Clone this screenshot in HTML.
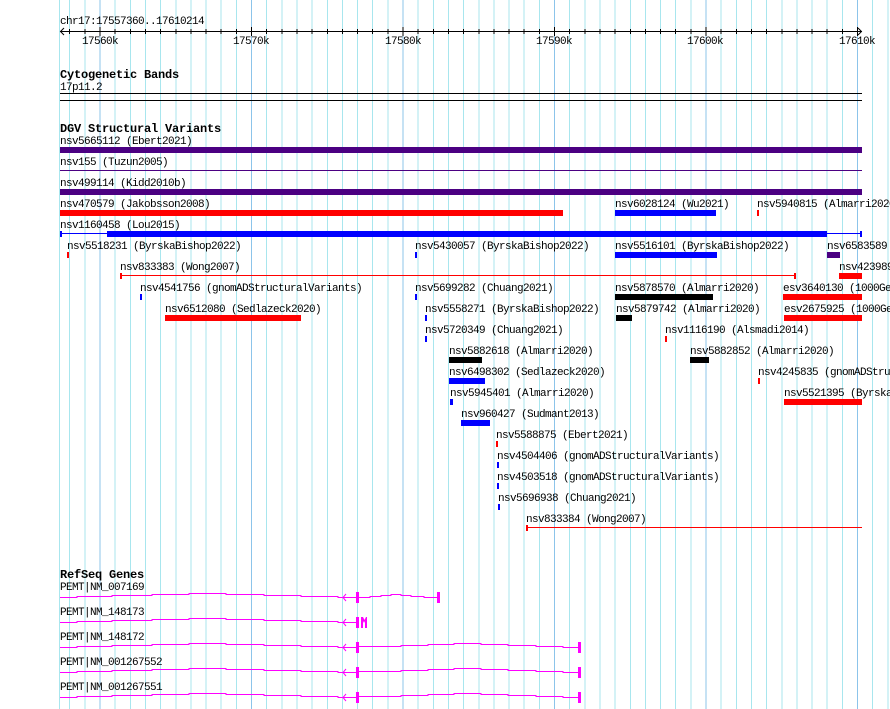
<!DOCTYPE html>
<html><head><meta charset="utf-8"><style>
html,body{margin:0;padding:0;background:#fff;width:890px;height:709px;overflow:hidden}
svg{display:block}
text{font-family:"Liberation Mono","DejaVu Sans Mono",monospace;font-size:11px;letter-spacing:-0.6px;fill:#000}
.h{font-weight:bold;font-size:12px;letter-spacing:-0.2px}
</style></head><body>
<svg width="890" height="709" viewBox="0 0 890 709" xmlns="http://www.w3.org/2000/svg" shape-rendering="crispEdges">
<g stroke-width="1">
<line x1="59.5" y1="0" x2="59.5" y2="709" stroke="#a8e6ee"/>
<line x1="69.7" y1="0" x2="69.7" y2="709" stroke="#a8e6ee"/>
<line x1="84.8" y1="0" x2="84.8" y2="709" stroke="#a8e6ee"/>
<line x1="100.0" y1="0" x2="100.0" y2="709" stroke="#8cc4ea"/>
<line x1="115.2" y1="0" x2="115.2" y2="709" stroke="#a8e6ee"/>
<line x1="130.3" y1="0" x2="130.3" y2="709" stroke="#a8e6ee"/>
<line x1="145.5" y1="0" x2="145.5" y2="709" stroke="#a8e6ee"/>
<line x1="160.6" y1="0" x2="160.6" y2="709" stroke="#a8e6ee"/>
<line x1="175.8" y1="0" x2="175.8" y2="709" stroke="#a8e6ee"/>
<line x1="190.9" y1="0" x2="190.9" y2="709" stroke="#a8e6ee"/>
<line x1="206.1" y1="0" x2="206.1" y2="709" stroke="#a8e6ee"/>
<line x1="221.2" y1="0" x2="221.2" y2="709" stroke="#a8e6ee"/>
<line x1="236.4" y1="0" x2="236.4" y2="709" stroke="#a8e6ee"/>
<line x1="251.5" y1="0" x2="251.5" y2="709" stroke="#8cc4ea"/>
<line x1="266.7" y1="0" x2="266.7" y2="709" stroke="#a8e6ee"/>
<line x1="281.8" y1="0" x2="281.8" y2="709" stroke="#a8e6ee"/>
<line x1="297.0" y1="0" x2="297.0" y2="709" stroke="#a8e6ee"/>
<line x1="312.1" y1="0" x2="312.1" y2="709" stroke="#a8e6ee"/>
<line x1="327.3" y1="0" x2="327.3" y2="709" stroke="#a8e6ee"/>
<line x1="342.4" y1="0" x2="342.4" y2="709" stroke="#a8e6ee"/>
<line x1="357.6" y1="0" x2="357.6" y2="709" stroke="#a8e6ee"/>
<line x1="372.7" y1="0" x2="372.7" y2="709" stroke="#a8e6ee"/>
<line x1="387.9" y1="0" x2="387.9" y2="709" stroke="#a8e6ee"/>
<line x1="403.0" y1="0" x2="403.0" y2="709" stroke="#8cc4ea"/>
<line x1="418.2" y1="0" x2="418.2" y2="709" stroke="#a8e6ee"/>
<line x1="433.3" y1="0" x2="433.3" y2="709" stroke="#a8e6ee"/>
<line x1="448.5" y1="0" x2="448.5" y2="709" stroke="#a8e6ee"/>
<line x1="463.6" y1="0" x2="463.6" y2="709" stroke="#a8e6ee"/>
<line x1="478.8" y1="0" x2="478.8" y2="709" stroke="#a8e6ee"/>
<line x1="493.9" y1="0" x2="493.9" y2="709" stroke="#a8e6ee"/>
<line x1="509.1" y1="0" x2="509.1" y2="709" stroke="#a8e6ee"/>
<line x1="524.2" y1="0" x2="524.2" y2="709" stroke="#a8e6ee"/>
<line x1="539.4" y1="0" x2="539.4" y2="709" stroke="#a8e6ee"/>
<line x1="554.5" y1="0" x2="554.5" y2="709" stroke="#8cc4ea"/>
<line x1="569.7" y1="0" x2="569.7" y2="709" stroke="#a8e6ee"/>
<line x1="584.8" y1="0" x2="584.8" y2="709" stroke="#a8e6ee"/>
<line x1="600.0" y1="0" x2="600.0" y2="709" stroke="#a8e6ee"/>
<line x1="615.1" y1="0" x2="615.1" y2="709" stroke="#a8e6ee"/>
<line x1="630.3" y1="0" x2="630.3" y2="709" stroke="#a8e6ee"/>
<line x1="645.4" y1="0" x2="645.4" y2="709" stroke="#a8e6ee"/>
<line x1="660.6" y1="0" x2="660.6" y2="709" stroke="#a8e6ee"/>
<line x1="675.7" y1="0" x2="675.7" y2="709" stroke="#a8e6ee"/>
<line x1="690.9" y1="0" x2="690.9" y2="709" stroke="#a8e6ee"/>
<line x1="706.0" y1="0" x2="706.0" y2="709" stroke="#8cc4ea"/>
<line x1="721.2" y1="0" x2="721.2" y2="709" stroke="#a8e6ee"/>
<line x1="736.3" y1="0" x2="736.3" y2="709" stroke="#a8e6ee"/>
<line x1="751.5" y1="0" x2="751.5" y2="709" stroke="#a8e6ee"/>
<line x1="766.6" y1="0" x2="766.6" y2="709" stroke="#a8e6ee"/>
<line x1="781.8" y1="0" x2="781.8" y2="709" stroke="#a8e6ee"/>
<line x1="796.9" y1="0" x2="796.9" y2="709" stroke="#a8e6ee"/>
<line x1="812.1" y1="0" x2="812.1" y2="709" stroke="#a8e6ee"/>
<line x1="827.2" y1="0" x2="827.2" y2="709" stroke="#a8e6ee"/>
<line x1="842.4" y1="0" x2="842.4" y2="709" stroke="#a8e6ee"/>
<line x1="857.5" y1="0" x2="857.5" y2="709" stroke="#8cc4ea"/>
<line x1="872.7" y1="0" x2="872.7" y2="709" stroke="#a8e6ee"/>
<line x1="887.8" y1="0" x2="887.8" y2="709" stroke="#a8e6ee"/>
</g>

<text x="60" y="24">chr17:17557360..17610214</text>
<line x1="60" y1="31.5" x2="862" y2="31.5" stroke="#000"/>
<path d="M64,28 L60.5,31.5 L64,35 M858,28 L861.5,31.5 L858,35" stroke="#000" fill="none" shape-rendering="auto"/>
<g stroke="#000">
<line x1="69.7" y1="29" x2="69.7" y2="34"/><line x1="84.8" y1="29" x2="84.8" y2="34"/><line x1="100" y1="27" x2="100" y2="36"/>
<line x1="115.2" y1="29" x2="115.2" y2="34"/><line x1="130.3" y1="29" x2="130.3" y2="34"/><line x1="145.5" y1="29" x2="145.5" y2="34"/><line x1="160.6" y1="29" x2="160.6" y2="34"/><line x1="175.8" y1="29" x2="175.8" y2="34"/><line x1="190.9" y1="29" x2="190.9" y2="34"/><line x1="206.1" y1="29" x2="206.1" y2="34"/><line x1="221.2" y1="29" x2="221.2" y2="34"/><line x1="236.4" y1="29" x2="236.4" y2="34"/><line x1="251.5" y1="27" x2="251.5" y2="36"/>
<line x1="266.7" y1="29" x2="266.7" y2="34"/><line x1="281.8" y1="29" x2="281.8" y2="34"/><line x1="297" y1="29" x2="297" y2="34"/><line x1="312.1" y1="29" x2="312.1" y2="34"/><line x1="327.3" y1="29" x2="327.3" y2="34"/><line x1="342.4" y1="29" x2="342.4" y2="34"/><line x1="357.6" y1="29" x2="357.6" y2="34"/><line x1="372.7" y1="29" x2="372.7" y2="34"/><line x1="387.9" y1="29" x2="387.9" y2="34"/><line x1="403" y1="27" x2="403" y2="36"/>
<line x1="418.2" y1="29" x2="418.2" y2="34"/><line x1="433.3" y1="29" x2="433.3" y2="34"/><line x1="448.5" y1="29" x2="448.5" y2="34"/><line x1="463.6" y1="29" x2="463.6" y2="34"/><line x1="478.8" y1="29" x2="478.8" y2="34"/><line x1="493.9" y1="29" x2="493.9" y2="34"/><line x1="509.1" y1="29" x2="509.1" y2="34"/><line x1="524.2" y1="29" x2="524.2" y2="34"/><line x1="539.4" y1="29" x2="539.4" y2="34"/><line x1="554.5" y1="27" x2="554.5" y2="36"/>
<line x1="569.7" y1="29" x2="569.7" y2="34"/><line x1="584.8" y1="29" x2="584.8" y2="34"/><line x1="600" y1="29" x2="600" y2="34"/><line x1="615.1" y1="29" x2="615.1" y2="34"/><line x1="630.3" y1="29" x2="630.3" y2="34"/><line x1="645.4" y1="29" x2="645.4" y2="34"/><line x1="660.6" y1="29" x2="660.6" y2="34"/><line x1="675.7" y1="29" x2="675.7" y2="34"/><line x1="690.9" y1="29" x2="690.9" y2="34"/><line x1="706" y1="27" x2="706" y2="36"/>
<line x1="721.2" y1="29" x2="721.2" y2="34"/><line x1="736.3" y1="29" x2="736.3" y2="34"/><line x1="751.5" y1="29" x2="751.5" y2="34"/><line x1="766.6" y1="29" x2="766.6" y2="34"/><line x1="781.8" y1="29" x2="781.8" y2="34"/><line x1="796.9" y1="29" x2="796.9" y2="34"/><line x1="812.1" y1="29" x2="812.1" y2="34"/><line x1="827.2" y1="29" x2="827.2" y2="34"/><line x1="842.4" y1="29" x2="842.4" y2="34"/><line x1="857.5" y1="27" x2="857.5" y2="36"/>
</g>
<text x="82" y="44">17560k</text>
<text x="233" y="44">17570k</text>
<text x="385" y="44">17580k</text>
<text x="536" y="44">17590k</text>
<text x="687" y="44">17600k</text>
<text x="839" y="44">17610k</text>

<text class="h" x="60" y="78">Cytogenetic Bands</text>
<text x="60" y="90">17p11.2</text>
<rect x="60" y="93" width="802" height="1" fill="#000"/>
<rect x="60" y="100" width="802" height="1" fill="#000"/>

<text class="h" x="60" y="132">DGV Structural Variants</text>
<g>
<text x="60" y="144">nsv5665112 (Ebert2021)</text>
<rect x="60" y="147" width="802" height="6" fill="#4b0082"/>
<text x="60" y="165">nsv155 (Tuzun2005)</text>
<rect x="60" y="170" width="802" height="1" fill="#4b0082"/>
<text x="60" y="186">nsv499114 (Kidd2010b)</text>
<rect x="60" y="189" width="802" height="6" fill="#4b0082"/>

<text x="60" y="207">nsv470579 (Jakobsson2008)</text>
<rect x="60" y="210" width="503" height="6" fill="#f00"/>
<text x="615" y="207">nsv6028124 (Wu2021)</text>
<rect x="615" y="210" width="101" height="6" fill="#00f"/>
<text x="757" y="207">nsv5940815 (Almarri2020)</text>
<rect x="757" y="210" width="2" height="6" fill="#f00"/>

<text x="60" y="228">nsv1160458 (Lou2015)</text>
<rect x="60" y="233" width="802" height="1" fill="#00f"/>
<rect x="60" y="231" width="2" height="6" fill="#00f"/>
<rect x="107" y="231" width="720" height="6" fill="#00f"/>
<rect x="860" y="231" width="2" height="6" fill="#00f"/>

<text x="67" y="249">nsv5518231 (ByrskaBishop2022)</text>
<rect x="67" y="252" width="2" height="6" fill="#f00"/>
<text x="415" y="249">nsv5430057 (ByrskaBishop2022)</text>
<rect x="415" y="252" width="2" height="6" fill="#00f"/>
<text x="615" y="249">nsv5516101 (ByrskaBishop2022)</text>
<rect x="615" y="252" width="102" height="6" fill="#00f"/>
<text x="827" y="249">nsv6583589</text>
<rect x="827" y="252" width="13" height="6" fill="#4b0082"/>

<text x="120" y="270">nsv833383 (Wong2007)</text>
<rect x="120" y="275" width="675" height="1" fill="#f00"/>
<rect x="120" y="273" width="2" height="6" fill="#f00"/>
<rect x="794" y="273" width="2" height="6" fill="#f00"/>
<text x="839" y="270">nsv423989</text>
<rect x="839" y="273" width="23" height="6" fill="#f00"/>

<text x="140" y="291">nsv4541756 (gnomADStructuralVariants)</text>
<rect x="140" y="294" width="2" height="6" fill="#00f"/>
<text x="415" y="291">nsv5699282 (Chuang2021)</text>
<rect x="415" y="294" width="2" height="6" fill="#00f"/>
<text x="615" y="291">nsv5878570 (Almarri2020)</text>
<rect x="615" y="294" width="98" height="6" fill="#000"/>
<text x="783" y="291">esv3640130 (1000Genomes)</text>
<rect x="783" y="294" width="79" height="6" fill="#f00"/>

<text x="165" y="312">nsv6512080 (Sedlazeck2020)</text>
<rect x="165" y="315" width="136" height="6" fill="#f00"/>
<text x="425" y="312">nsv5558271 (ByrskaBishop2022)</text>
<rect x="425" y="315" width="2" height="6" fill="#00f"/>
<text x="616" y="312">nsv5879742 (Almarri2020)</text>
<rect x="616" y="315" width="16" height="6" fill="#000"/>
<text x="784" y="312">esv2675925 (1000Genomes)</text>
<rect x="784" y="315" width="78" height="6" fill="#f00"/>

<text x="425" y="333">nsv5720349 (Chuang2021)</text>
<rect x="425" y="336" width="2" height="6" fill="#00f"/>
<text x="665" y="333">nsv1116190 (Alsmadi2014)</text>
<rect x="665" y="336" width="2" height="6" fill="#f00"/>

<text x="449" y="354">nsv5882618 (Almarri2020)</text>
<rect x="449" y="357" width="33" height="6" fill="#000"/>
<text x="690" y="354">nsv5882852 (Almarri2020)</text>
<rect x="690" y="357" width="19" height="6" fill="#000"/>

<text x="449" y="375">nsv6498302 (Sedlazeck2020)</text>
<rect x="449" y="378" width="36" height="6" fill="#00f"/>
<text x="758" y="375">nsv4245835 (gnomADStructuralVariants)</text>
<rect x="758" y="378" width="2" height="6" fill="#f00"/>

<text x="450" y="396">nsv5945401 (Almarri2020)</text>
<rect x="450" y="399" width="3" height="6" fill="#00f"/>
<text x="784" y="396">nsv5521395 (ByrskaBishop2022)</text>
<rect x="784" y="399" width="78" height="6" fill="#f00"/>

<text x="461" y="417">nsv960427 (Sudmant2013)</text>
<rect x="461" y="420" width="29" height="6" fill="#00f"/>
<text x="496" y="438">nsv5588875 (Ebert2021)</text>
<rect x="496" y="441" width="2" height="6" fill="#f00"/>
<text x="497" y="459">nsv4504406 (gnomADStructuralVariants)</text>
<rect x="497" y="462" width="2" height="6" fill="#00f"/>
<text x="497" y="480">nsv4503518 (gnomADStructuralVariants)</text>
<rect x="497" y="483" width="2" height="6" fill="#00f"/>
<text x="498" y="501">nsv5696938 (Chuang2021)</text>
<rect x="498" y="504" width="2" height="6" fill="#00f"/>
<text x="526" y="522">nsv833384 (Wong2007)</text>
<rect x="526" y="527" width="336" height="1" fill="#f00"/>
<rect x="526" y="525" width="2" height="6" fill="#f00"/>
</g>

<text class="h" x="60" y="578">RefSeq Genes</text>
<g fill="none" stroke="#f0f" stroke-width="1">
<polyline points="60,597.5 77,597.5 77,596.5 112,596.5 112,595.5 152,595.5 152,594.5 189,594.5 189,593.5 226,593.5 226,594.5 264,594.5 264,595.5 301,595.5 301,596.5 338,596.5 338,597.5 356,597.5"/>
<path d="M346,594 L343,597.5 L346,601" shape-rendering="auto"/>
<polyline points="359,597.5 370,597.5 370,596.5 381,596.5 381,595.5 391,595.5 391,594.5 401,594.5 401,595.5 411,595.5 411,596.5 424,596.5 424,597.5 437,597.5"/>
<polyline points="60,622.5 77,622.5 77,621.5 112,621.5 112,620.5 152,620.5 152,619.5 189,619.5 189,618.5 226,618.5 226,619.5 264,619.5 264,620.5 301,620.5 301,621.5 338,621.5 338,622.5 356,622.5"/>
<path d="M346,619 L343,622.5 L346,626" shape-rendering="auto"/>
<polyline points="60,647.5 77,647.5 77,646.5 112,646.5 112,645.5 152,645.5 152,644.5 189,644.5 189,643.5 226,643.5 226,644.5 264,644.5 264,645.5 301,645.5 301,646.5 338,646.5 338,647.5 356,647.5"/>
<path d="M346,644 L343,647.5 L346,651" shape-rendering="auto"/>
<polyline points="359,646.5 401,646.5 401,645.5 428,645.5 428,644.5 454,644.5 454,643.5 481,643.5 481,644.5 508,644.5 508,645.5 536,645.5 536,646.5 563,646.5 563,647.5 578,647.5"/>
<polyline points="60,672.5 77,672.5 77,671.5 112,671.5 112,670.5 152,670.5 152,669.5 189,669.5 189,668.5 226,668.5 226,669.5 264,669.5 264,670.5 301,670.5 301,671.5 338,671.5 338,672.5 356,672.5"/>
<path d="M346,669 L343,672.5 L346,676" shape-rendering="auto"/>
<polyline points="359,671.5 401,671.5 401,670.5 428,670.5 428,669.5 454,669.5 454,668.5 481,668.5 481,669.5 508,669.5 508,670.5 536,670.5 536,671.5 563,671.5 563,672.5 578,672.5"/>
<polyline points="60,697.5 77,697.5 77,696.5 112,696.5 112,695.5 152,695.5 152,694.5 189,694.5 189,693.5 226,693.5 226,694.5 264,694.5 264,695.5 301,695.5 301,696.5 338,696.5 338,697.5 356,697.5"/>
<path d="M346,694 L343,697.5 L346,701" shape-rendering="auto"/>
<polyline points="359,696.5 401,696.5 401,695.5 428,695.5 428,694.5 454,694.5 454,693.5 481,693.5 481,694.5 508,694.5 508,695.5 536,695.5 536,696.5 563,696.5 563,697.5 578,697.5"/>
</g>
<g fill="#f0f">
<rect x="356" y="592" width="3" height="11"/><rect x="437" y="592" width="3" height="11"/>
<rect x="356" y="617" width="3" height="11"/>
<path d="M361,617 h2 l1.5,3 l1.5,-3 h1 v11 h-2 v-7 l-1,2 l-1,-2 v7 h-2 z"/>
<rect x="356" y="642" width="3" height="11"/><rect x="578" y="642" width="3" height="11"/>
<rect x="356" y="667" width="3" height="11"/><rect x="578" y="667" width="3" height="11"/>
<rect x="356" y="692" width="3" height="11"/><rect x="578" y="692" width="3" height="11"/>
</g>
<text x="60" y="590">PEMT|NM_007169</text>
<text x="60" y="615">PEMT|NM_148173</text>
<text x="60" y="640">PEMT|NM_148172</text>
<text x="60" y="665">PEMT|NM_001267552</text>
<text x="60" y="690">PEMT|NM_001267551</text>
</svg>
</body></html>
